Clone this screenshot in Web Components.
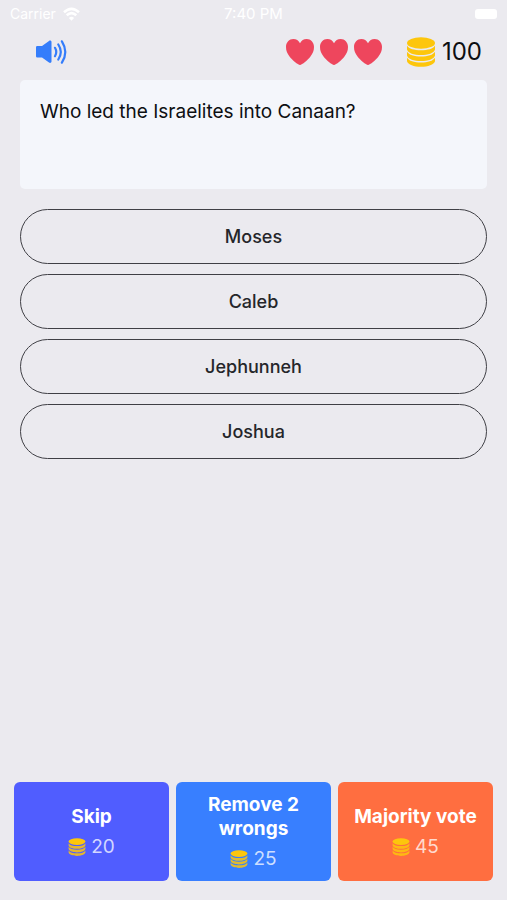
<!DOCTYPE html>
<html lang="en">
<head>
<meta charset="utf-8">
<meta name="viewport" content="width=device-width, initial-scale=1">
<title>Bible quiz</title>
<style>
  body { margin: 0; background: #ebeaef; color: #0d0f12; font-family: Inter, "Liberation Sans", sans-serif; }
</style>
</head>
<body>
<quiz-screen></quiz-screen>
<script>
function define(name, html) {
  const template = document.createElement('template');
  template.innerHTML = html;
  customElements.define(name, class extends HTMLElement {
    constructor() {
      super();
      this.attachShadow({ mode: 'open' }).append(template.content.cloneNode(true));
    }
  });
}

define('status-bar', `
  <style>
    :host { display: grid; grid-template-columns: 1fr auto 1fr; align-items: center; height: 28px; padding: 0 10px; color: #fff; font-size: 14px; line-height: 28px; }
    .left { display: flex; align-items: center; gap: 7px; }
    .time { font-size: 15px; }
    .battery { justify-self: end; width: 22px; height: 10px; border-radius: 3px; background: #fff; }
    svg { display: block; }
  </style>
  <span class="left"><span>Carrier</span>
    <svg width="17" height="14" viewBox="0 0 17 14" fill="none" stroke="#fff" stroke-width="2.6" aria-hidden="true">
      <path d="M1 5.2Q8.500-1.600 16 5.200"/><path d="M3.700 8.300Q8.500 4 13.300 8.300"/><path d="M8.500 13.800L5.900 11Q8.500 8.700 11.100 11Z" fill="#fff" stroke="none"/>
    </svg></span>
  <span class="time">7:40 PM</span>
  <span class="battery" role="img" aria-label="Battery full"></span>`);

define('coin-icon', `
  <style>
    :host { display: block; width: 30px; height: 30px; }
    svg { display: block; width: 100%; height: 100%; }
    g { opacity: var(--stack-opacity, 1); }
  </style>
  <svg viewBox="0 0 30 30" fill="#fdc60c" aria-hidden="true">
    <ellipse cx="15" cy="6" rx="14" ry="5.700"/>
    <g>
      <path d="M1 8.600C3 12 8 13.300 15 13.300S27 12 29 8.600V12.400C28 16 22 18 15 18S2 16 1 12.400Z"/>
      <path d="M1 14.700C3 17.900 8 19.400 15 19.400S27 17.900 29 14.700V18.400C28 22 22 24 15 24S2 22 1 18.400Z"/>
      <path d="M1 20.700C3 23.900 8 25.400 15 25.400S27 23.900 29 20.700V24.200C28 27.700 22 29.800 15 29.800S2 27.700 1 24.200Z"/>
    </g>
  </svg>`);

define('heart-icon', `
  <style>:host { display: block; width: 28px; height: 26px; } svg { display: block; }</style>
  <svg width="28" height="26" viewBox="0 0 28 26" fill="#ee465d" aria-hidden="true">
    <path d="M14 26C12 25.800 6 20.700 3.700 17.700C1.200 14.500 0 11.700 0 8C0 3.400 3.300 0 7.300 0C10.300 0 12.700 1.600 14 4.200C15.300 1.600 17.700 0 20.700 0C24.700 0 28 3.400 28 8C28 11.700 26.800 14.500 24.300 17.700C22 20.700 16 25.800 14 26Z"/>
  </svg>`);

define('game-header', `
  <style>
    :host { display: flex; align-items: center; justify-content: space-between; height: 48px; padding: 0 25px 0 36px; }
    button { padding: 0; border: 0; background: none; cursor: pointer; }
    svg { display: block; }
    .score, .lives, .coins { display: flex; align-items: center; }
    .score { gap: 24px; } .lives { gap: 6px; } .coins { gap: 6px; font-size: 24px; line-height: 32px; }
  </style>
  <button type="button" aria-label="Read question aloud">
    <svg width="31" height="24" viewBox="0 0 31 24" aria-hidden="true">
      <path fill="#347dfb" d="M1.200 6H6L13 .900C14.200.200 15.500.800 15.500 2V21.500C15.500 22.700 14.200 23.300 13 22.600L6 17.500H1.200Q0 17.500 0 16.300V7.200Q0 6 1.200 6Z"/>
      <path fill="none" stroke="#347dfb" stroke-width="2.200" stroke-linecap="round" d="M19 7.800Q21.500 12 19 16.200M22.300 4.500Q27.300 12 22.300 19.500M25.900 1.300Q32.700 12 25.900 22.700"/>
    </svg>
  </button>
  <div class="score">
    <div class="lives" role="img" aria-label="3 lives"><heart-icon></heart-icon><heart-icon></heart-icon><heart-icon></heart-icon></div>
    <div class="coins"><coin-icon></coin-icon><span>100</span></div>
  </div>`);

define('question-card', `
  <style>
    :host { display: block; min-height: 109px; box-sizing: border-box; padding: 20px; border-radius: 5px; background: #f4f6fb; font-size: 19px; line-height: 24px; }
    p { margin: 0; }
  </style><p><slot></slot></p>`);

define('answer-option', `
  <style>
    :host { display: block; }
    button { display: block; width: 100%; min-height: 55px; padding: 0 20px; border: 1px solid #3f3f45; border-radius: 28px; background: none; color: #25262a; font: 500 18px/24px Inter, "Liberation Sans", sans-serif; cursor: pointer; }
  </style><button type="button"><slot></slot></button>`);

define('help-button', `
  <style>
    :host { display: grid; }
    button { display: flex; flex-direction: column; align-items: center; justify-content: center; gap: 6px; min-height: 99px; padding: 8px; border: 0; border-radius: 6px; background: var(--fill); color: #fff; font: 700 19px/24px Inter, "Liberation Sans", sans-serif; cursor: pointer; }
    .price { display: flex; align-items: center; gap: 5px; font-weight: 400; color: rgb(255 255 255 / .75); }
    coin-icon { width: 18px; height: 18px; --stack-opacity: .85; }
  </style>
  <button type="button"><span><slot></slot></span><span class="price"><coin-icon></coin-icon><slot name="price"></slot></span></button>`);

define('quiz-screen', `
  <style>
    :host { display: flex; flex-direction: column; min-height: 100vh; }
    main { flex: 1; padding: 4px 20px 20px; }
    .answers { display: grid; gap: 10px; margin-top: 20px; }
    footer { display: grid; grid-template-columns: repeat(3, 1fr); gap: 7px; padding: 0 14px 19px; }
    .skip { --fill: #505dff; } .remove { --fill: #387fff; } .vote { --fill: #ff6e40; }
  </style>
  <status-bar></status-bar>
  <game-header></game-header>
  <main>
    <question-card>Who led the Israelites into Canaan?</question-card>
    <div class="answers">
      <answer-option>Moses</answer-option>
      <answer-option>Caleb</answer-option>
      <answer-option>Jephunneh</answer-option>
      <answer-option>Joshua</answer-option>
    </div>
  </main>
  <footer>
    <help-button class="skip">Skip<span slot="price">20</span></help-button>
    <help-button class="remove">Remove 2 wrongs<span slot="price">25</span></help-button>
    <help-button class="vote">Majority vote<span slot="price">45</span></help-button>
  </footer>`);
</script>
</body>
</html>
